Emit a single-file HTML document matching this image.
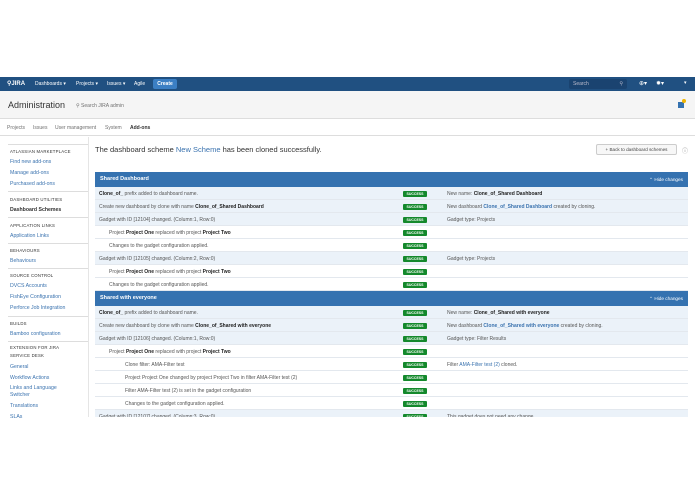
<!DOCTYPE html><html><head><meta charset="utf-8"><style>
*{margin:0;padding:0;box-sizing:border-box}
body{width:695px;height:494px;background:#fff;font-family:"Liberation Sans",sans-serif;font-size:5px;color:#333;position:relative;overflow:hidden}
.a{position:absolute;white-space:nowrap}
.nav{left:0;top:77px;width:695px;height:14px;background:#205081;color:#fff}
.hdr{left:0;top:91px;width:695px;height:28px;background:#f5f5f5;border-bottom:1px solid #ddd}
.tabs{left:0;top:119px;width:695px;height:17px;border-bottom:1px solid #ddd;color:#707070}
.side{left:0;top:137px;width:89px;height:280px;border-right:1px solid #e5e5e5}
.sh{font-size:4.3px;color:#333;letter-spacing:.2px}
.sl{color:#3b73af;font-size:5.2px}
.dv{left:8px;width:80px;height:1px;background:#ddd}
.tbl{left:95px;width:593px}
.th{height:15px;background:#3572b0;color:#fff;font-weight:bold;font-size:5.5px;line-height:15px;padding-left:5px;position:relative}
.th span{position:absolute;right:5px;font-weight:normal;font-size:4.7px}
.r{height:13px;line-height:14px;border-bottom:1px solid #e3e8ee;position:relative;color:#555}
.r.p{background:#ebf2f9}
.r .d{position:absolute;left:4px}
.r .s{position:absolute;left:308px;top:4px;width:24px;height:6px;background:#14892c;color:#fff;font-size:3.5px;line-height:6px;text-align:center;font-weight:bold;border-radius:1px}
.r .t{position:absolute;left:352px}
b{color:#222}
.lk{color:#3b73af}
</style></head><body>
<div class="a nav">
<span class="a" style="left:7px;top:3px;font-weight:bold;font-size:6px">⚲JIRA</span>
<span class="a" style="left:35px;top:4px">Dashboards ▾</span>
<span class="a" style="left:76px;top:4px">Projects ▾</span>
<span class="a" style="left:107px;top:4px">Issues ▾</span>
<span class="a" style="left:134px;top:4px">Agile</span>
<div class="a" style="left:153px;top:2px;width:24px;height:10px;background:#3b7fc4;border-radius:2px;font-weight:bold;text-align:center;line-height:10px">Create</div>
<div class="a" style="left:569px;top:2px;width:58px;height:10px;background:#1a4370;border-radius:2px;color:#bbc;line-height:10px;padding-left:4px">Search<span style="position:absolute;right:4px">⚲</span></div>
<span class="a" style="left:639px;top:3px;font-size:6px">⊕▾</span>
<span class="a" style="left:656px;top:3px;font-size:6px">✹▾</span>
<span class="a" style="left:684px;top:3px">▾</span>
</div>
<div class="a hdr">
<span class="a" style="left:8px;top:9px;font-size:9px;color:#333">Administration</span>
<span class="a" style="left:76px;top:12px;color:#707070">⚲ Search JIRA admin</span>
<div class="a" style="left:678px;top:11px;width:6px;height:6px;background:#3572b0"></div>
<div class="a" style="left:682px;top:8px;width:4px;height:4px;background:#f0b400;border-radius:50%"></div>
</div>
<div class="a tabs">
<span class="a" style="left:7px;top:6px">Projects</span>
<span class="a" style="left:33px;top:6px">Issues</span>
<span class="a" style="left:55px;top:6px">User management</span>
<span class="a" style="left:105px;top:6px">System</span>
<span class="a" style="left:130px;top:6px;color:#333;font-weight:bold">Add-ons</span>
</div>
<div class="a side">
<div class="a dv" style="top:7px"></div>
<span class="a sh" style="left:10px;top:12px">ATLASSIAN MARKETPLACE</span>
<span class="a sl" style="left:10px;top:22px">Find new add-ons</span>
<span class="a sl" style="left:10px;top:33px">Manage add-ons</span>
<span class="a sl" style="left:10px;top:44px">Purchased add-ons</span>
<div class="a dv" style="top:54px"></div>
<span class="a sh" style="left:10px;top:60px">DASHBOARD UTILITIES</span>
<span class="a" style="left:10px;top:70px;font-weight:bold;color:#333;font-size:5.2px">Dashboard Schemes</span>
<div class="a dv" style="top:80px"></div>
<span class="a sh" style="left:10px;top:86px">APPLICATION LINKS</span>
<span class="a sl" style="left:10px;top:96px">Application Links</span>
<div class="a dv" style="top:106px"></div>
<span class="a sh" style="left:10px;top:111px">BEHAVIOURS</span>
<span class="a sl" style="left:10px;top:121px">Behaviours</span>
<div class="a dv" style="top:131px"></div>
<span class="a sh" style="left:10px;top:136px">SOURCE CONTROL</span>
<span class="a sl" style="left:10px;top:146px">DVCS Accounts</span>
<span class="a sl" style="left:10px;top:157px">FishEye Configuration</span>
<span class="a sl" style="left:10px;top:168px">Perforce Job Integration</span>
<div class="a dv" style="top:179px"></div>
<span class="a sh" style="left:10px;top:184px">BUILDS</span>
<span class="a sl" style="left:10px;top:194px">Bamboo configuration</span>
<div class="a dv" style="top:204px"></div>
<span class="a sh" style="left:10px;top:208px">EXTENSION FOR JIRA</span>
<span class="a sh" style="left:10px;top:216px">SERVICE DESK</span>
<span class="a sl" style="left:10px;top:227px">General</span>
<span class="a sl" style="left:10px;top:238px">Workflow Actions</span>
<span class="a sl" style="left:10px;top:248px">Links and Language</span>
<span class="a sl" style="left:10px;top:255px">Switcher</span>
<span class="a sl" style="left:10px;top:266px">Translations</span>
<span class="a sl" style="left:10px;top:277px">SLAs</span>
</div>
<span class="a" style="left:95px;top:145px;font-size:7.5px;color:#333">The dashboard scheme <span class="lk">New Scheme</span> has been cloned successfully.</span>
<div class="a" style="left:596px;top:144px;width:81px;height:11px;border:1px solid #ccc;background:#f7f7f7;border-radius:2px;font-size:4.6px;line-height:9px;text-align:center;color:#444">+ Back to dashboard schemes</div>
<span class="a" style="left:682px;top:146px;color:#888;font-size:6px">ⓘ</span>
<div class="a tbl" style="top:172px;height:245px;overflow:hidden">
<div class="th">Shared Dashboard<span>⌃ Hide changes</span></div>
<div class="r p"><span class="d"><b>Clone_of_</b> prefix added to dashboard name.</span><span class="s">SUCCESS</span><span class="t">New name: <b>Clone_of_Shared Dashboard</b></span></div>
<div class="r p"><span class="d">Create new dashboard by clone with name <b>Clone_of_Shared Dashboard</b></span><span class="s">SUCCESS</span><span class="t">New dashboard <b class="lk">Clone_of_Shared Dashboard</b> created by cloning.</span></div>
<div class="r p"><span class="d">Gadget with ID [12104] changed. (Column:1, Row:0)</span><span class="s">SUCCESS</span><span class="t">Gadget type: Projects</span></div>
<div class="r"><span class="d" style="left:14px">Project <b>Project One</b> replaced with project <b>Project Two</b></span><span class="s">SUCCESS</span></div>
<div class="r"><span class="d" style="left:14px">Changes to the gadget configuration applied.</span><span class="s">SUCCESS</span></div>
<div class="r p"><span class="d">Gadget with ID [12105] changed. (Column:2, Row:0)</span><span class="s">SUCCESS</span><span class="t">Gadget type: Projects</span></div>
<div class="r"><span class="d" style="left:14px">Project <b>Project One</b> replaced with project <b>Project Two</b></span><span class="s">SUCCESS</span></div>
<div class="r"><span class="d" style="left:14px">Changes to the gadget configuration applied.</span><span class="s">SUCCESS</span></div>
<div class="th">Shared with everyone<span>⌃ Hide changes</span></div>
<div class="r p"><span class="d"><b>Clone_of_</b> prefix added to dashboard name.</span><span class="s">SUCCESS</span><span class="t">New name: <b>Clone_of_Shared with everyone</b></span></div>
<div class="r p"><span class="d">Create new dashboard by clone with name <b>Clone_of_Shared with everyone</b></span><span class="s">SUCCESS</span><span class="t">New dashboard <b class="lk">Clone_of_Shared with everyone</b> created by cloning.</span></div>
<div class="r p"><span class="d">Gadget with ID [12106] changed. (Column:1, Row:0)</span><span class="s">SUCCESS</span><span class="t">Gadget type: Filter Results</span></div>
<div class="r"><span class="d" style="left:14px">Project <b>Project One</b> replaced with project <b>Project Two</b></span><span class="s">SUCCESS</span></div>
<div class="r"><span class="d" style="left:30px">Clone filter: AMA-Filter test</span><span class="s">SUCCESS</span><span class="t">Filter <span class="lk">AMA-Filter test (2)</span> cloned.</span></div>
<div class="r"><span class="d" style="left:30px">Project Project One changed by project Project Two in filter AMA-Filter test (2)</span><span class="s">SUCCESS</span></div>
<div class="r"><span class="d" style="left:30px">Filter AMA-Filter test (2) is set in the gadget configuration</span><span class="s">SUCCESS</span></div>
<div class="r"><span class="d" style="left:30px">Changes to the gadget configuration applied.</span><span class="s">SUCCESS</span></div>
<div class="r p"><span class="d">Gadget with ID [12107] changed. (Column:3, Row:0)</span><span class="s">SUCCESS</span><span class="t">This gadget does not need any change.</span></div>
</div>
</body></html>
